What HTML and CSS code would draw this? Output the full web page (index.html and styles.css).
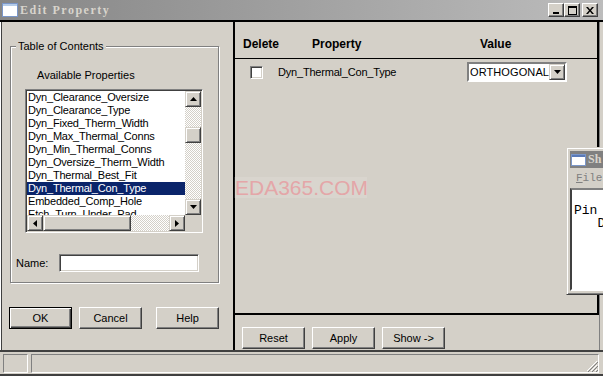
FILE: index.html
```html
<!DOCTYPE html>
<html lang="en">
<head>
  <meta charset="UTF-8">
  <title>Edit Property</title>
  <link rel="stylesheet" href="styles.css">
</head>
<body>

  <div class="window">
    <div class="titlebar">
      <svg class="app-icon" width="16" height="14" viewBox="0 0 16 14">
        <rect x="0.5" y="0.5" width="15" height="13" fill="#fff" stroke="#7a96c8"/>
        <rect x="1" y="1" width="14" height="2" fill="#b4cbe8"/>
      </svg>
      <span class="title">Edit Property</span>
      <div class="caption-buttons">
        <span class="cap-btn">
          <svg width="8" height="8" viewBox="0 0 8 8"><rect x="1" y="6" width="6" height="2" fill="#000"/></svg>
        </span>
        <span class="cap-btn">
          <svg width="9" height="9" viewBox="0 0 9 9"><rect x="0.5" y="0.5" width="8" height="8" fill="none" stroke="#000"/><rect x="0" y="0" width="9" height="2" fill="#000"/></svg>
        </span>
        <span class="cap-btn close">
          <svg width="8" height="7" viewBox="0 0 8 7"><path d="M0 0h2l2 2.5 2-2.5h2l-3 3.5 3 3.5h-2l-2-2.5-2 2.5h-2l3-3.5z" fill="#000"/></svg>
        </span>
      </div>
    </div>

    <div class="main">
      <div class="left-pane">
        <fieldset class="toc">
          <legend>Table of Contents</legend>
          <div class="avail-label">Available Properties</div>

          <div class="listbox">
            <ul class="items">
              <li>Dyn_Clearance_Oversize</li>
              <li>Dyn_Clearance_Type</li>
              <li>Dyn_Fixed_Therm_Width</li>
              <li>Dyn_Max_Thermal_Conns</li>
              <li>Dyn_Min_Thermal_Conns</li>
              <li>Dyn_Oversize_Therm_Width</li>
              <li>Dyn_Thermal_Best_Fit</li>
              <li class="selected">Dyn_Thermal_Con_Type</li>
              <li>Embedded_Comp_Hole</li>
              <li>Etch_Turn_Under_Pad</li>
            </ul>
            <div class="vscroll">
              <span class="sbtn">
                <svg width="7" height="4" viewBox="0 0 7 4"><path d="M3.5 0L7 4H0z" fill="#000"/></svg>
              </span>
              <span class="track-gap"></span>
              <span class="sbtn thumb"></span>
              <span class="track-fill"></span>
              <span class="sbtn">
                <svg width="7" height="4" viewBox="0 0 7 4"><path d="M0 0h7L3.5 4z" fill="#000"/></svg>
              </span>
            </div>
            <div class="hscroll">
              <span class="sbtn">
                <svg width="4" height="7" viewBox="0 0 4 7"><path d="M4 0v7L0 3.5z" fill="#000"/></svg>
              </span>
              <span class="sbtn hthumb"></span>
              <span class="track-fill"></span>
              <span class="sbtn">
                <svg width="4" height="7" viewBox="0 0 4 7"><path d="M0 0l4 3.5L0 7z" fill="#000"/></svg>
              </span>
            </div>
            <div class="corner"></div>
          </div>

          <div class="name-row">
            <label>Name:</label>
            <span class="field"></span>
          </div>
        </fieldset>

        <div class="dialog-buttons">
          <button class="btn default">OK</button>
          <button class="btn">Cancel</button>
          <button class="btn help">Help</button>
        </div>
      </div>

      <div class="right-pane">
        <div class="prop-table">
          <div class="prop-head">
            <span>Delete</span>
            <span>Property</span>
            <span>Value</span>
          </div>
          <div class="prop-row">
            <span class="check"></span>
            <span class="prop-name">Dyn_Thermal_Con_Type</span>
            <span class="select">
              <span class="select-text">ORTHOGONAL</span>
              <span class="sbtn">
                <svg width="7" height="4" viewBox="0 0 7 4"><path d="M0 0h7L3.5 4z" fill="#000"/></svg>
              </span>
            </span>
          </div>
        </div>

        <div class="table-buttons">
          <button class="btn">Reset</button>
          <button class="btn">Apply</button>
          <button class="btn">Show -&gt;</button>
        </div>
      </div>
    </div>

    <div class="statusbar">
      <span class="seg first"></span>
      <span class="seg rest">
        <svg class="grip" width="12" height="12" viewBox="0 0 12 12">
          <path d="M11 1L1 11M11 5L5 11M11 9L9 11" stroke="#fff" stroke-width="1"/>
          <path d="M12 2L2 12M12 6L6 12M12 10L10 12" stroke="#808080" stroke-width="1"/>
        </svg>
      </span>
    </div>
  </div>

  <div class="watermark">EDA365.COM</div>

  <div class="show-window">
    <div class="sw-title">
      <svg width="15" height="12" viewBox="0 0 15 12">
        <rect x="0.5" y="0.5" width="14" height="11" fill="#fff" stroke="#7a96c8"/>
        <rect x="1" y="1" width="13" height="2" fill="#5a7ab8"/>
      </svg>
      <span>Sh</span>
    </div>
    <div class="sw-menu"><u>F</u>ile</div>
    <div class="sw-text">Pin
   D</div>
  </div>

</body>
</html>
```

FILE: styles.css
```css
* {
  box-sizing: border-box;
}

body {
  margin: 0;
  background-color: #d4d0c8;
  font-family: "Liberation Sans", Arial, sans-serif;
  font-size: 11px;
  color: #000;
  overflow: hidden;
}

.window {
  width: 603px;
  height: 376px;
  display: flex;
  flex-direction: column;
}

/* title bar */

.titlebar {
  height: 20px;
  display: flex;
  align-items: center;
  padding-left: 2px;
  background: linear-gradient(to right, #868686, #bcbcbc);
}

.app-icon {
  display: block;
}

.title {
  margin-left: 2px;
  font-family: "Liberation Serif", serif;
  font-weight: bold;
  font-size: 12px;
  letter-spacing: 1.5px;
  color: #d8d4cc;
}

.caption-buttons {
  margin-left: auto;
  display: flex;
  padding-right: 5px;
}

.cap-btn {
  width: 16px;
  height: 14px;
  display: flex;
  align-items: center;
  justify-content: center;
  background: #d4d0c8;
  border: 1px solid;
  border-color: #fff #404040 #404040 #fff;
  box-shadow: inset -1px -1px #808080;
}

.cap-btn.close {
  margin-left: 2px;
}

/* main panes */

.main {
  height: 332px;
  display: flex;
  border-top: 2px solid #000;
  border-bottom: 2px solid #404040;
  padding-right: 3px;
}

.left-pane {
  width: 235px;
  border-right: 2px solid #000;
  box-shadow: inset 1px 0 #fff, inset 2px 0 #404040;
  padding-left: 9px;
}

.toc {
  margin: 18px 0 0 1px;
  width: 209px;
  padding: 0 0 10px 0;
  border: 1px solid #808080;
  box-shadow: 1px 1px 0 #fff, inset 1px 1px 0 #fff;
}

.toc legend {
  margin-left: 5px;
  padding: 0 2px;
  line-height: 13px;
  background: #d4d0c8;
}

.avail-label {
  margin: 16px 0 0 26px;
  line-height: 13px;
}

.listbox {
  margin: 7px 0 0 14px;
  width: 178px;
  height: 144px;
  padding: 1px;
  background: #fff;
  border: 1px solid;
  border-color: #808080 #fff #fff #808080;
  box-shadow: inset 1px 1px #404040, inset -1px -1px #d4d0c8;
  display: grid;
  grid-template-columns: 158px 16px;
  grid-template-rows: 124px 16px;
}

.items {
  list-style: none;
  margin: 0;
  padding: 0;
  overflow: hidden;
}

.items li {
  height: 13px;
  line-height: 13px;
  padding-left: 1px;
  white-space: nowrap;
  letter-spacing: -0.2px;
}

.items li.selected {
  background: #0a246a;
  color: #fff;
}

.vscroll,
.hscroll {
  display: flex;
  background: repeating-conic-gradient(#fff 0 25%, #d4d0c8 0 50%) 0 0 / 2px 2px;
}

.vscroll {
  flex-direction: column;
}

.sbtn {
  flex: none;
  width: 16px;
  height: 16px;
  display: flex;
  align-items: center;
  justify-content: center;
  background: #d4d0c8;
  border: 1px solid;
  border-color: #d4d0c8 #404040 #404040 #d4d0c8;
  box-shadow: inset 1px 1px #fff, inset -1px -1px #808080;
}

.track-gap {
  height: 20px;
}

.track-fill {
  flex: 1;
}

.hthumb {
  width: 88px;
}

.corner {
  background: #d4d0c8;
}

.name-row {
  margin-top: 21px;
  padding-left: 5px;
  display: grid;
  grid-template-columns: 43px 140px;
  align-items: center;
}

.field {
  height: 18px;
  background: #fff;
  border: 1px solid;
  border-color: #808080 #fff #fff #808080;
  box-shadow: inset 1px 1px #404040, inset -1px -1px #d4d0c8;
}

/* buttons */

.btn {
  width: 63px;
  height: 22px;
  padding: 0;
  font-family: "Liberation Sans", Arial, sans-serif;
  font-size: 11px;
  color: #000;
  background: #d4d0c8;
  border: 1px solid;
  border-color: #fff #404040 #404040 #fff;
  box-shadow: inset -1px -1px #808080;
}

.btn.default {
  border-color: #000;
  box-shadow: inset 1px 1px #fff, inset -1px -1px #404040, inset -2px -2px #808080;
}

.dialog-buttons {
  margin-top: 24px;
  display: flex;
  gap: 7px;
}

.dialog-buttons .help {
  margin-left: 7px;
}

/* right pane */

.right-pane {
  flex: 1;
  display: flex;
  flex-direction: column;
  border-right: 1px solid #808080;
}

.prop-table {
  height: 293px;
  border-right: 2px solid #000;
  border-bottom: 2px solid #000;
}

.prop-head {
  height: 37px;
  padding: 15px 0 0 8px;
  display: grid;
  grid-template-columns: 69px 168px auto;
  font-size: 12px;
  font-weight: bold;
  line-height: 14px;
  border-bottom: 1px solid #000;
}

.prop-row {
  padding: 3px 0 0 15px;
  display: grid;
  grid-template-columns: 28px 189px 100px;
  align-items: center;
}

.check {
  width: 13px;
  height: 13px;
  background: #fff;
  border: 1px solid;
  border-color: #808080 #fff #fff #808080;
  box-shadow: inset 1px 1px #404040, inset -1px -1px #d4d0c8;
}

.prop-name {
  letter-spacing: -0.2px;
}

.select {
  height: 20px;
  display: flex;
  align-items: center;
  background: #fff;
  border: 2px solid;
  border-color: #808080 #fff #fff #808080;
  padding-left: 1px;
}

.select-text {
  flex: 1;
  letter-spacing: 0.1px;
}

.table-buttons {
  padding: 12px 0 0 7px;
  display: flex;
  gap: 7px;
}

/* status bar */

.statusbar {
  height: 24px;
  display: flex;
  gap: 3px;
  padding: 2px 4px 1px 3px;
  border-bottom: 2px solid #404040;
}

.seg {
  border: 1px solid;
  border-color: #808080 #fff #fff #808080;
}

.seg.first {
  width: 25px;
}

.seg.rest {
  flex: 1;
  display: flex;
  justify-content: flex-end;
  align-items: flex-end;
}

.grip {
  display: block;
}

/* overlays */

.watermark {
  position: absolute;
  left: 234px;
  top: 177px;
  width: 133px;
  height: 21px;
  padding-left: 1px;
  background: rgba(255, 255, 255, 0.12);
  color: #e4a6a8;
  font-size: 21px;
  line-height: 21px;
  white-space: nowrap;
}

.show-window {
  position: absolute;
  left: 566px;
  top: 147px;
  width: 37px;
  height: 148px;
  padding: 3px 0 3px 3px;
  background: #d4d0c8;
  border: 1px solid;
  border-right: none;
  border-color: #d4d0c8 #404040 #404040 #d4d0c8;
  box-shadow: inset 1px 1px #fff, inset 0 -1px #808080;
}

.sw-title {
  height: 17px;
  display: flex;
  align-items: center;
  gap: 2px;
  padding-left: 1px;
  background: #808080;
  font-family: "Liberation Serif", serif;
  font-weight: bold;
  font-size: 12px;
  color: #d8d4cc;
  white-space: nowrap;
  overflow: hidden;
}

.sw-title svg {
  flex: none;
  display: block;
}

.sw-menu {
  height: 20px;
  padding: 4px 0 0 6px;
  font-family: "Liberation Mono", monospace;
  font-size: 11px;
  color: #808080;
  white-space: nowrap;
}

.sw-text {
  height: 103px;
  padding: 14px 0 0 2px;
  background: #fff;
  border: 2px solid;
  border-right: none;
  border-color: #808080 #fff #fff #404040;
  font-family: "Liberation Mono", monospace;
  font-size: 13px;
  line-height: 13px;
  white-space: pre;
  overflow: hidden;
}
```
